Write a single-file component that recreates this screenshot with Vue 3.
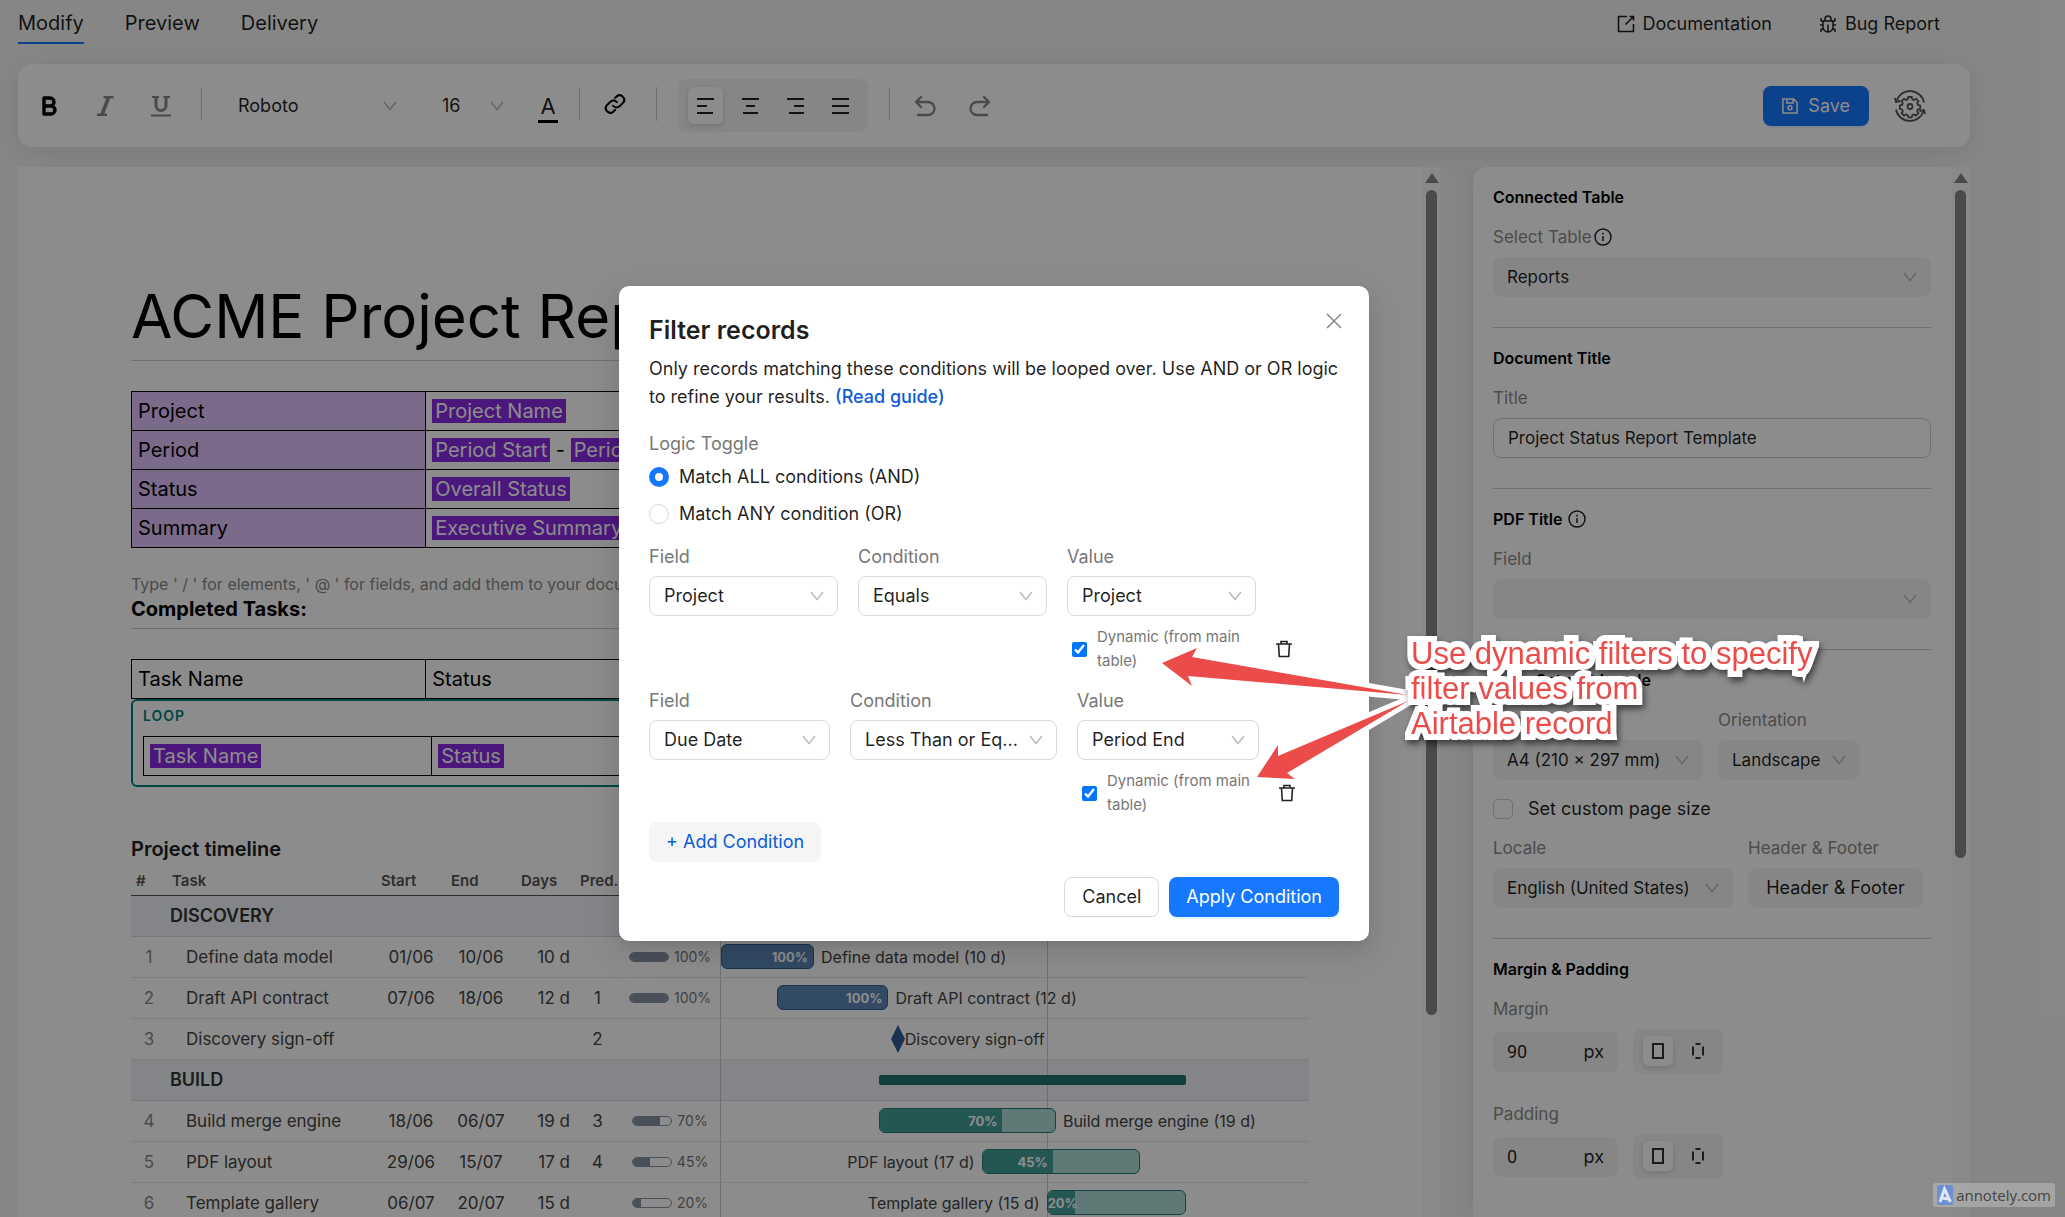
<script setup>
import { ref } from 'vue'

const logic = ref('and')
const title = ref('Project Status Report Template')

const details = [
  { label: 'Project', tags: ['Project Name'] },
  { label: 'Period', tags: ['Period Start', 'Period End'] },
  { label: 'Status', tags: ['Overall Status'] },
  { label: 'Summary', tags: ['Executive Summary'] },
]

const SPAN = 63.2
const pct = (days) => (days / SPAN) * 100 + '%'

const rows = [
  { group: 'DISCOVERY' },
  { n: 1, task: 'Define data model', start: '01/06', end: '10/06', days: 10, done: 100, at: 0, tone: 'blue' },
  { n: 2, task: 'Draft API contract', start: '07/06', end: '18/06', days: 12, pred: 1, done: 100, at: 6, tone: 'blue' },
  { n: 3, task: 'Discovery sign-off', pred: 2, milestone: true, at: 19 },
  { group: 'BUILD', at: 17, days: 33 },
  { n: 4, task: 'Build merge engine', start: '18/06', end: '06/07', days: 19, pred: 3, done: 70, at: 17, tone: 'teal' },
  { n: 5, task: 'PDF layout', start: '29/06', end: '15/07', days: 17, pred: 4, done: 45, at: 28, tone: 'teal', left: true },
  { n: 6, task: 'Template gallery', start: '06/07', end: '20/07', days: 15, done: 20, at: 35, tone: 'teal', left: true },
]

const conditions = ref([
  { field: 'Project', op: 'Equals', value: 'Project', dynamic: true, cls: 'even' },
  { field: 'Due Date', op: 'Less Than or Eq...', value: 'Period End', dynamic: true, cls: 'wide' },
])

const spacing = [
  { id: 'margin', label: 'Margin', value: '90' },
  { id: 'padding', label: 'Padding', value: '0' },
]
</script>

<template>
  <div class="app">
    <header class="top">
      <nav class="tabs">
        <a href="#modify" class="tab active">Modify</a>
        <a href="#preview" class="tab">Preview</a>
        <a href="#delivery" class="tab">Delivery</a>
      </nav>
      <div class="help">
        <a href="#docs">
          <svg width="18" height="18" viewBox="0 0 18 18" fill="none" stroke="currentColor" stroke-width="1.6"><path d="M10 1.500H1.500v15h15V9M16.500 1.500L8.500 9.500M12.500 1.500h4V5.500" /></svg>
          Documentation
        </a>
        <a href="#bug">
          <svg width="18" height="18" viewBox="0 0 18 18" fill="none" stroke="currentColor" stroke-width="1.500"><path d="M4 6h10v6a5 5 0 0 1-10 0zM6 6V4a3 3 0 0 1 6 0v2M9 9.500V17M1 10h3M14 10h3M4 6.500L2 5.500V3M14 6.500l2-1V3M4.500 13.500L2 14.500V17M13.500 13.500l2.500 1V17" /></svg>
          Bug Report
        </a>
      </div>
    </header>

    <div class="toolbar" role="toolbar">
      <button class="tool bold" aria-label="Bold">
        <svg width="20" height="22" viewBox="0 0 20 22" fill="none" stroke="currentColor" stroke-width="3.400" stroke-linejoin="round"><path d="M5 3h6a4 4 0 0 1 0 8H5zM5 11h7a4 4 0 0 1 0 8H5z" /></svg>
      </button>
      <button class="tool" aria-label="Italic">
        <svg width="20" height="22" viewBox="0 0 20 22" fill="none" stroke="currentColor"><path d="M8.500 2.200h10M2 19.800h10" stroke-width="2.600" /><path d="M13.500 2.500L7 19.500" stroke-width="3.600" /></svg>
      </button>
      <button class="tool under" aria-label="Underline">
        <svg width="22" height="22" viewBox="0 0 22 22" fill="none" stroke="currentColor"><path d="M6 2v8.500a5 5 0 0 0 10 0V2" stroke-width="3" /><path d="M2 2h7M13.500 2h6.500M1 20.500h20" stroke-width="1.800" /></svg>
      </button>
      <span class="sep"></span>
      <label class="pick font">
        <select aria-label="Font"><option>Roboto</option></select>
        <svg class="chev" viewBox="0 0 14 10"><path d="M1 1l6 7.500L13 1" /></svg>
      </label>
      <label class="pick size">
        <select aria-label="Font size"><option>16</option></select>
        <svg class="chev" viewBox="0 0 14 10"><path d="M1 1l6 7.500L13 1" /></svg>
      </label>
      <button class="color" aria-label="Text colour">A</button>
      <span class="sep"></span>
      <button class="tool link" aria-label="Link">
        <svg width="22" height="22" viewBox="0 0 24 24" fill="none" stroke="currentColor" stroke-width="2.300" stroke-linecap="round"><path d="M10 14a5 5 0 0 0 7 .5l4-4a5 5 0 0 0-7-7l-2 2" /><path d="M14 10a5 5 0 0 0-7-.5l-4 4a5 5 0 0 0 7 7l2-2" /></svg>
      </button>
      <span class="sep"></span>
      <div class="aligns">
        <button class="align on" aria-label="Align left"><svg width="18" height="16" viewBox="0 0 18 16"><path d="M0 1h17M0 8h10M0 15h16" /></svg></button>
        <button class="align" aria-label="Align center"><svg width="18" height="16" viewBox="0 0 18 16"><path d="M0 1h17M4 8h9M1 15h15" /></svg></button>
        <button class="align" aria-label="Align right"><svg width="18" height="16" viewBox="0 0 18 16"><path d="M0 1h17M7 8h10M2 15h15" /></svg></button>
        <button class="align" aria-label="Justify"><svg width="18" height="16" viewBox="0 0 18 16"><path d="M0 1h17M0 8h17M0 15h17" /></svg></button>
      </div>
      <span class="sep"></span>
      <button class="tool hist" aria-label="Undo">
        <svg width="22" height="22" viewBox="0 0 22 22" fill="none" stroke="currentColor" stroke-width="2.400" stroke-linecap="round" stroke-linejoin="round"><path d="M7 2L2 7l5 5M2.500 7H14a6.500 6.500 0 0 1 0 13H4" /></svg>
      </button>
      <button class="tool hist" aria-label="Redo">
        <svg width="22" height="22" viewBox="0 0 22 22" fill="none" stroke="currentColor" stroke-width="2.400" stroke-linecap="round" stroke-linejoin="round"><path d="M15 2l5 5-5 5M19.500 7H8a6.500 6.500 0 0 0 0 13h10" /></svg>
      </button>
      <span class="grow"></span>
      <button class="save">
        <svg width="16" height="16" viewBox="0 0 18 18" fill="none" stroke="currentColor" stroke-width="1.700"><path d="M1 1h12l4 4v12H1zM5.500 1v4.500h7V1" /><circle cx="9" cy="11" r="2.200" /></svg>
        Save
      </button>
      <button class="gear" aria-label="Settings">
        <svg width="32" height="32" viewBox="0 0 32 32" fill="none" stroke="currentColor" stroke-width="1.800">
          <path d="M2.500 11A14.200 14.200 0 0 1 30 12.500M29.500 21A14.200 14.200 0 0 1 2 19.500" />
          <path d="M1 8l1 4 4.500-1M31 24l-1-4-4.500 1" />
          <path d="M14.300 7h3.400l.6 2.300 1.700.7 2-1.200 2.400 2.400-1.200 2 .7 1.700 2.300.6v3.400l-2.300.6-.7 1.700 1.200 2-2.400 2.400-2-1.200-1.700.7-.6 2.300h-3.400l-.6-2.300-1.700-.7-2 1.200-2.400-2.400 1.200-2-.7-1.700-2.300-.6v-3.400l2.300-.6.7-1.700-1.200-2 2.400-2.400 2 1.200 1.700-.7z" />
          <circle cx="16" cy="16.500" r="2.500" />
        </svg>
      </button>
    </div>

    <div class="work">
      <main class="editor">
        <div class="doc">
          <h1>ACME Project Report</h1>

          <table class="grid shaded">
            <tbody>
              <tr v-for="d in details" :key="d.label">
                <th scope="row">{{ d.label }}</th>
                <td>
                  <template v-for="(t, i) in d.tags" :key="t"><template v-if="i"> - </template><span class="tag">{{ t }}</span></template>
                </td>
              </tr>
            </tbody>
          </table>

          <p class="hint">Type ' / ' for elements, ' @ ' for fields, and add them to your document</p>
          <h2>Completed Tasks:</h2>

          <table class="grid">
            <tbody><tr><th scope="col">Task Name</th><td>Status</td></tr></tbody>
          </table>
          <div class="loop">
            <span class="loop-label">LOOP</span>
            <table class="grid">
              <tbody><tr><td><span class="tag">Task Name</span></td><td><span class="tag">Status</span></td></tr></tbody>
            </table>
          </div>

          <h3>Project timeline</h3>
          <table class="gantt">
            <colgroup>
              <col class="c-n"><col class="c-task"><col class="c-date"><col class="c-date"><col class="c-days"><col class="c-pred"><col class="c-prog"><col>
            </colgroup>
            <thead>
              <tr><th>#</th><th>Task</th><th>Start</th><th>End</th><th>Days</th><th>Pred.</th><th></th><th></th></tr>
            </thead>
            <tbody>
              <tr v-for="(r, i) in rows" :key="i" :class="{ group: r.group }">
                <td class="n">{{ r.n }}</td>
                <td v-if="r.group" class="gname" colspan="6">{{ r.group }}</td>
                <template v-else>
                  <td class="task">{{ r.task }}</td>
                  <td class="mid">{{ r.start }}</td>
                  <td class="mid">{{ r.end }}</td>
                  <td class="days">{{ r.days ? r.days + ' d' : '' }}</td>
                  <td class="mid">{{ r.pred }}</td>
                  <td>
                    <div v-if="r.done" class="prog">
                      <span class="track"><span class="fill" :style="{ width: r.done + '%' }"></span></span>{{ r.done }}%
                    </div>
                  </td>
                </template>
                <td class="chart">
                  <div class="lane">
                    <span class="month"></span>
                    <span v-if="r.group && r.days" class="summary" :style="{ left: pct(r.at), width: pct(r.days) }"></span>
                    <template v-if="r.milestone">
                      <svg class="diamond" :style="{ left: pct(r.at) }" width="14" height="28" viewBox="0 0 14 28"><path d="M7 0l7 14-7 14L0 14z" /></svg>
                      <span class="note after" :style="{ left: pct(r.at) }">{{ r.task }}</span>
                    </template>
                    <template v-if="r.tone">
                      <span class="bar" :class="r.tone" :style="{ left: pct(r.at), width: pct(r.days) }">
                        <span class="part" :style="{ width: r.done + '%' }">{{ r.done }}%</span>
                      </span>
                      <span v-if="r.left" class="note before" :style="{ right: pct(SPAN - r.at) }">{{ r.task }} ({{ r.days }} d)</span>
                      <span v-else class="note after" :style="{ left: pct(r.at + r.days) }">{{ r.task }} ({{ r.days }} d)</span>
                    </template>
                  </div>
                </td>
              </tr>
            </tbody>
          </table>
        </div>
        <div class="scroll">
          <svg width="14" height="10" viewBox="0 0 14 10"><path d="M7 0l7 10H0z" /></svg>
          <span class="thumb long"></span>
        </div>
      </main>

      <aside class="panel">
        <div class="panel-body">
          <section>
            <h4>Connected Table</h4>
            <label class="lab" for="table">Select Table
              <svg class="info" viewBox="0 0 18 18"><circle cx="9" cy="9" r="8" /><path d="M9 8v5M9 4.800v1.600" /></svg>
            </label>
            <div class="pick soft">
              <select id="table"><option>Reports</option></select>
              <svg class="chev" viewBox="0 0 14 10"><path d="M1 1l6 7.500L13 1" /></svg>
            </div>
          </section>
          <section>
            <h4>Document Title</h4>
            <label class="lab" for="title">Title</label>
            <input id="title" v-model="title" class="text" type="text">
          </section>
          <section>
            <h4>PDF Title
              <svg class="info" viewBox="0 0 18 18"><circle cx="9" cy="9" r="8" /><path d="M9 8v5M9 4.800v1.600" /></svg>
            </h4>
            <label class="lab" for="pdf">Field</label>
            <div class="pick soft">
              <select id="pdf"><option></option></select>
              <svg class="chev" viewBox="0 0 14 10"><path d="M1 1l6 7.500L13 1" /></svg>
            </div>
          </section>
          <section>
            <h4>Page Setup &amp; Locale</h4>
            <div class="cols">
              <div class="w-size">
                <label class="lab" for="psize">Page Size</label>
                <div class="pick soft">
                  <select id="psize"><option>A4 (210 × 297 mm)</option></select>
                  <svg class="chev" viewBox="0 0 14 10"><path d="M1 1l6 7.500L13 1" /></svg>
                </div>
              </div>
              <div class="w-orient">
                <label class="lab" for="orient">Orientation</label>
                <div class="pick soft">
                  <select id="orient"><option>Landscape</option></select>
                  <svg class="chev" viewBox="0 0 14 10"><path d="M1 1l6 7.500L13 1" /></svg>
                </div>
              </div>
            </div>
            <label class="custom"><input type="checkbox"> Set custom page size</label>
            <div class="cols">
              <div class="w-locale">
                <label class="lab" for="locale">Locale</label>
                <div class="pick soft">
                  <select id="locale"><option>English (United States)</option></select>
                  <svg class="chev" viewBox="0 0 14 10"><path d="M1 1l6 7.500L13 1" /></svg>
                </div>
              </div>
              <div class="w-hf">
                <span class="lab">Header &amp; Footer</span>
                <button class="softbtn">Header &amp; Footer</button>
              </div>
            </div>
          </section>
          <section>
            <h4>Margin &amp; Padding</h4>
            <div v-for="s in spacing" :key="s.id" class="space">
              <label class="lab" :for="s.id">{{ s.label }}</label>
              <div class="cols">
                <div class="num"><input :id="s.id" type="text" :value="s.value"><span>px</span></div>
                <div class="modes">
                  <button class="mode on" aria-label="All sides"><svg width="12" height="16" viewBox="0 0 12 16"><path d="M1 1h10v14H1z" /></svg></button>
                  <button class="mode" aria-label="Each side"><svg width="12" height="16" viewBox="0 0 12 16"><path d="M3.500 1h5M3.500 15h5M1 3.500v9M11 3.500v9" /></svg></button>
                </div>
              </div>
            </div>
          </section>
        </div>
        <div class="scroll">
          <svg width="14" height="10" viewBox="0 0 14 10"><path d="M7 0l7 10H0z" /></svg>
          <span class="thumb short"></span>
        </div>
      </aside>
    </div>

    <div class="mask">
      <div class="modal" role="dialog" aria-labelledby="dlg">
        <button class="close" aria-label="Close">
          <svg width="18" height="18" viewBox="0 0 18 18"><path d="M2 2l14 14M16 2L2 16" /></svg>
        </button>
        <h2 id="dlg" class="dlg-title">Filter records</h2>
        <p class="lead">Only records matching these conditions will be looped over. Use AND or OR logic to refine your results. <a href="#guide">(Read guide)</a></p>

        <div class="grey toggle">Logic Toggle</div>
        <label class="radio"><input v-model="logic" type="radio" name="logic" value="and"> Match ALL conditions (AND)</label>
        <label class="radio"><input v-model="logic" type="radio" name="logic" value="or"> Match ANY condition (OR)</label>

        <div v-for="(c, i) in conditions" :key="i" class="cond" :class="c.cls">
          <div class="cell f">
            <label class="grey" :for="'f' + i">Field</label>
            <div class="pick line">
              <select :id="'f' + i"><option>{{ c.field }}</option></select>
              <svg class="chev" viewBox="0 0 14 10"><path d="M1 1l6 7.500L13 1" /></svg>
            </div>
          </div>
          <div class="cell o">
            <label class="grey" :for="'o' + i">Condition</label>
            <div class="pick line">
              <select :id="'o' + i"><option>{{ c.op }}</option></select>
              <svg class="chev" viewBox="0 0 14 10"><path d="M1 1l6 7.500L13 1" /></svg>
            </div>
          </div>
          <div class="cell v">
            <label class="grey" :for="'v' + i">Value</label>
            <div class="pick line">
              <select :id="'v' + i"><option>{{ c.value }}</option></select>
              <svg class="chev" viewBox="0 0 14 10"><path d="M1 1l6 7.500L13 1" /></svg>
            </div>
            <label class="dyn"><input v-model="c.dynamic" type="checkbox"><span>Dynamic (from main table)</span></label>
          </div>
          <button class="trash" aria-label="Remove condition">
            <svg width="16" height="18" viewBox="0 0 16 18"><path d="M0 4h16M5 4V1.500h6V4M2.500 4l.8 12.500h9.400L13.500 4" /></svg>
          </button>
        </div>

        <button class="add">+ Add Condition</button>
        <div class="foot">
          <button class="cancel">Cancel</button>
          <button class="apply">Apply Condition</button>
        </div>

        <div class="callout">
          <svg width="250" height="140" viewBox="1160 645 250 140">
            <g class="halo">
              <path d="M1162 663l35-15-5 9 216 38-220-19 4 10z" />
              <path d="M1257 777l21-32v11l130-55-121 72 8 6z" />
            </g>
            <path d="M1162 663l35-15-5 9 216 38-220-19 4 10z" />
            <path d="M1257 777l21-32v11l130-55-121 72 8 6z" />
          </svg>
          <p>Use dynamic filters to specify<br>filter values from<br>Airtable record</p>
        </div>
      </div>
    </div>

    <a class="mark" href="#annotely">
      <svg width="16" height="20" viewBox="0 0 16 20"><rect width="16" height="20" rx="2" /><path d="M3 17L7.500 4l6 13M4.500 13l7 1" /></svg>
      annotely.com
    </a>
  </div>
</template>

<style>
body { margin: 0; background: #f5f5f5; }
</style>

<style scoped>
.app, .app * { box-sizing: border-box; }
.app {
  position: relative;
  display: flex;
  flex-direction: column;
  height: 100vh;
  overflow: hidden;
  padding: 0 95px 0 18px;
  background: #f5f5f5;
  color: rgba(0, 0, 0, .88);
  font: 18px/24px Inter, "Liberation Sans", sans-serif;
}
button, select, input { font: inherit; color: inherit; margin: 0; }
button { border: 0; background: none; padding: 0; }
a { color: inherit; text-decoration: none; }
h1, h2, h3, h4, p { margin: 0; }

.top { display: flex; justify-content: space-between; height: 44px; flex: none; border-bottom: 1px solid #f0f0f0; }
.tabs { display: flex; gap: 41px; font-size: 20px; }
.tab { height: 44px; line-height: 46px; border-bottom: 2px solid transparent; }
.tab.active { border-color: #1677ff; }
.help { display: flex; gap: 47px; align-items: center; padding: 4px 30px 0 0; }
.help a { display: flex; align-items: center; gap: 8px; }

.toolbar {
  display: flex;
  align-items: center;
  flex: none;
  height: 83px;
  margin: 20px 0;
  padding: 0 44px 0 20px;
  background: #fff;
  border-radius: 14px;
  box-shadow: 0 5px 30px rgba(0, 0, 0, .1);
}
.tool { display: flex; justify-content: center; width: 22px; margin-right: 34px; color: #888; }
.tool.bold { color: #000; }
.tool.under { margin-right: 29px; }
.tool.link { color: #000; margin: -4px 30px 0 24px; }
.tool.hist { margin: 0 9px 0 24px; }
.sep { width: 1px; height: 34px; background: #ccc; margin-top: -4px; }
.pick { position: relative; display: block; }
.pick select { display: block; width: 100%; height: 40px; padding: 0 14px; border: 0; border-radius: 8px; outline: 0; background: transparent; appearance: none; }
.chev { position: absolute; right: 14px; top: 15px; width: 14px; height: 10px; fill: none; stroke: #bbb; stroke-width: 1.500; pointer-events: none; }
.font { width: 187px; margin-left: 22px; }
.size { width: 90px; margin: 0 9px 0 17px; }
.color { width: 42px; height: 34px; margin-right: 10px; font-size: 22px; line-height: 28px; background: linear-gradient(#000, #000) 11px 100% / 20px 3px no-repeat; }
.aligns { display: flex; gap: 10px; height: 53px; margin: 0 21px; padding: 8px 10px; border-radius: 8px; background: #f5f5f5; }
.align { display: flex; align-items: center; justify-content: center; width: 35px; border-radius: 6px; }
.align.on { background: #fff; box-shadow: 0 2px 6px rgba(0, 0, 0, .15); }
.align svg { fill: none; stroke: #222; stroke-width: 2; }
.grow { flex: 1; }
.save { display: flex; align-items: center; gap: 10px; height: 40px; padding: 0 19px; border-radius: 8px; color: #fff; background: #1677ff; box-shadow: 0 2px 0 rgba(5, 145, 255, .1); }
.gear { display: flex; margin-left: 25px; color: #555; }

.work { display: flex; flex: 1; min-height: 0; gap: 32px; }
.editor { display: flex; flex: 1; min-width: 0; overflow: hidden; background: #fff; }
.doc { flex: 1; min-width: 0; padding: 113px; color: #000; font-size: 20px; }
.scroll { display: flex; flex-direction: column; align-items: center; flex: none; width: 19px; padding: 6px 0 0; gap: 7px; background: #fafafa; fill: #888; }
.scroll svg { flex: none; }
.thumb { width: 11px; border-radius: 6px; background: #888; }
.thumb.long { height: 79%; }
.thumb.short { height: 64%; }

h1 { font-size: 60px; font-weight: 400; line-height: 72px; padding-bottom: 8px; border-bottom: 1px solid #ccc; margin-bottom: 30px; }
.grid { width: 100%; table-layout: fixed; border-collapse: collapse; }
.grid th, .grid td { height: 39px; padding: 0 6px; border: 1px solid #000; text-align: left; font-weight: 400; }
.grid th:first-child, .grid td:first-child { width: 25%; }
.shaded th { background: #e1c1fb; }
.tag { display: inline-block; padding: 0 3px; background: #8a2be2; color: #fff; }
.hint { margin-top: 24px; font-size: 16px; line-height: 25px; color: #888; }
.doc h2 { font-size: 20px; font-weight: 700; line-height: 24px; padding-bottom: 7px; margin-bottom: 30px; border-bottom: 1px solid #ccc; }
.loop { padding: 5px 10px 9px; border: 2px solid #008080; border-radius: 6px; }
.loop-label { display: block; margin-bottom: 10px; font-size: 14px; font-weight: 600; line-height: 20px; letter-spacing: 1px; color: #008080; }
h3 { margin-top: 50px; font-size: 20px; font-weight: 600; line-height: 24px; color: #222; }

.gantt { width: 100%; table-layout: fixed; border-collapse: separate; border-spacing: 0; font-size: 17px; color: #444; }
.c-n { width: 36px; } .c-task { width: 209px; } .c-date { width: 70px; } .c-days { width: 59px; } .c-pred { width: 45px; } .c-prog { width: 100px; }
.gantt th { height: 35px; padding: 6px 5px 0; border-bottom: 1px solid #555; text-align: left; font-size: 15px; font-weight: 600; color: #555; }
.gantt td { height: 41px; padding: 0; border-bottom: 1px solid #e6e6e6; white-space: nowrap; }
.gantt .group td { background: #f0f3f7; border-color: #d6dae0; font-size: 18px; font-weight: 600; color: #333; }
.gantt .gname { padding-left: 3px; }
.gantt .n { text-align: center; color: #888; }
.gantt .task { padding-left: 19px; }
.gantt .mid { text-align: center; }
.gantt .days { text-align: right; padding-right: 5px; }
.prog { display: flex; align-items: center; justify-content: center; gap: 5px; font-size: 14px; color: #777; }
.track { width: 40px; height: 10px; border: 1px solid #8892a5; border-radius: 5px; overflow: hidden; }
.fill { display: block; height: 100%; background: #8892a5; }
.lane { position: relative; height: 40px; border-left: 1px solid #ccc; }
.month { position: absolute; left: 55.500%; top: 0; width: 1px; height: 41px; background: #ccc; }
.summary { position: absolute; top: 15px; height: 10px; border-radius: 2px; background: #21736b; }
.bar { position: absolute; top: 7px; height: 25px; border: 1px solid; border-radius: 6px; overflow: hidden; }
.bar.blue { border-color: #335f95; background: #5b87b6; }
.bar.teal { border-color: #237c74; background: #b0dcd8; }
.part { display: flex; align-items: center; justify-content: safe flex-end; height: 100%; padding-right: 5px; font-size: 13px; font-weight: 700; color: #fff; }
.teal .part { background: #439e97; }
.diamond { position: absolute; top: 6px; margin-left: -7px; fill: #315991; }
.note { position: absolute; top: 8px; font-size: 16px; }
.note.after { margin-left: 7px; }
.note.before { margin-right: 7px; }

.panel { display: flex; flex: none; width: 497px; overflow: hidden; border-radius: 14px 0 0; background: #fff; box-shadow: 0 0 30px rgba(0, 0, 0, .1); clip-path: inset(0 0 0 -32px); }
.panel-body { flex: 1; padding: 0 20px; }
section { padding: 20px 0 30px; border-bottom: 1px solid #ccc; }
section:last-child { border: 0; }
h4 { display: flex; align-items: center; gap: 6px; height: 20px; margin-bottom: 20px; font-size: 16px; font-weight: 600; color: #000; }
.lab { display: flex; align-items: center; gap: 2px; height: 20px; margin-bottom: 10px; font-size: 17px; color: #8a8a8a; }
.info { width: 18px; height: 18px; fill: none; stroke: #222; stroke-width: 1.500; }
.soft select { background: #f5f5f5; }
.panel .pick select { font-size: 17px; }
.text { display: block; width: 100%; height: 40px; padding: 0 14px; border: 1px solid #ccc; border-radius: 8px; background: #fff; font-size: 17px; }
.cols { display: flex; gap: 15px; align-items: center; }
.w-size { width: 210px; } .w-orient { width: 142px; } .w-locale { width: 240px; } .w-hf { width: 175px; }
.custom { display: flex; align-items: center; gap: 15px; height: 20px; margin: 19px 0; }
.custom input { width: 20px; height: 20px; border: 1px solid #ccc; border-radius: 5px; appearance: none; }
.softbtn { width: 100%; height: 40px; border-radius: 8px; background: #f5f5f5; }
.space { margin-bottom: 30px; }
.num { display: flex; align-items: center; width: 125px; height: 40px; padding: 0 14px; border-radius: 8px; background: #f5f5f5; }
.num input { flex: 1; width: 0; padding: 0; border: 0; background: transparent; font-family: Roboto, sans-serif; }
.modes { display: flex; gap: 10px; height: 45px; padding: 7px 10px 8px; border-radius: 8px; background: #f5f5f5; }
.mode { display: flex; align-items: center; justify-content: center; width: 30px; border-radius: 6px; }
.mode.on { background: #fff; box-shadow: 0 2px 6px rgba(0, 0, 0, .15); }
.mode svg { fill: none; stroke: #333; stroke-width: 2; }

.mask { position: absolute; inset: 0; display: flex; justify-content: center; align-items: flex-start; padding: 286px 77px 0 0; background: rgba(0, 0, 0, .45); }
.modal { position: relative; width: 750px; padding: 30px 30px 24px; border-radius: 10px; background: #fff; box-shadow: 0 8px 20px rgba(0, 0, 0, .08), 0 4px 8px -5px rgba(0, 0, 0, .12), 0 11px 35px 10px rgba(0, 0, 0, .05); }
.close { position: absolute; right: 26px; top: 26px; display: flex; fill: none; stroke: #888; stroke-width: 1.500; }
.dlg-title { margin-bottom: 11px; font-size: 25px; font-weight: 600; line-height: 28px; }
.lead { line-height: 28px; margin-bottom: 19px; }
.lead a { color: #0b5cd6; font-weight: 500; }
.grey { display: block; line-height: 28px; color: #777; }
.radio { display: flex; align-items: center; gap: 10px; height: 37px; }
.radio input { width: 20px; height: 20px; border: 1px solid #d9d9d9; border-radius: 50%; appearance: none; background: #fff; }
.radio input:checked { border: 6px solid #1677ff; }
.cond { display: flex; gap: 20px; margin-bottom: 5px; }
.radio + .cond { margin: 11px 0 14px; }
.cond .grey { margin-bottom: 5px; }
.even .cell { width: 189px; }
.wide .f { width: 181px; } .wide .o { width: 207px; } .wide .v { width: 182px; }
.line select { border: 1px solid #d9d9d9; background: #fff; }
.dyn { display: flex; align-items: center; gap: 10px; margin-top: 9px; padding-left: 5px; font-size: 15px; line-height: 24px; color: #777; }
.dyn input { flex: none; width: 15px; height: 15px; accent-color: #0075ff; }
.trash { display: flex; align-items: center; align-self: flex-end; height: 48px; fill: none; stroke: #222; stroke-width: 1.600; }
.add { display: block; height: 40px; padding: 0 17px; border-radius: 8px; background: #f5f5f5; color: #0b5cd6; }
.foot { display: flex; justify-content: flex-end; gap: 10px; margin-top: 15px; }
.foot button { height: 40px; border-radius: 8px; }
.cancel { padding: 0 17px; border: 1px solid #d9d9d9; box-shadow: 0 2px 0 rgba(0, 0, 0, .02); }
.apply { padding: 0 17px; background: #1677ff; color: #fff; box-shadow: 0 2px 0 rgba(5, 145, 255, .1); }

.callout { position: absolute; left: 541px; top: 359px; display: flex; align-items: flex-start; color: #eb4c4a; }
.callout svg { flex: none; overflow: visible; fill: #eb4c4a; }
.halo { fill: #fff; stroke: #fff; stroke-width: 10; stroke-linejoin: round; }
.callout p { margin: -9px 0 0 1px; white-space: nowrap; font: 31px/35px "Liberation Sans", Arial, sans-serif; -webkit-text-stroke: 12px #fff; paint-order: stroke fill; stroke-linejoin: round; filter: drop-shadow(2px 4px 3px rgba(0, 0, 0, .55)); }

.mark { position: absolute; right: 10px; bottom: 10px; display: flex; align-items: center; gap: 3px; height: 24px; padding: 0 4px; border-radius: 3px; background: rgba(255, 255, 255, .25); color: #444; font: 15px/24px "Open Sans", "Noto Sans", sans-serif; }
.mark rect { fill: #6c8fd0; }
.mark path { fill: none; stroke: #dde6f6; stroke-width: 3; }
</style>
